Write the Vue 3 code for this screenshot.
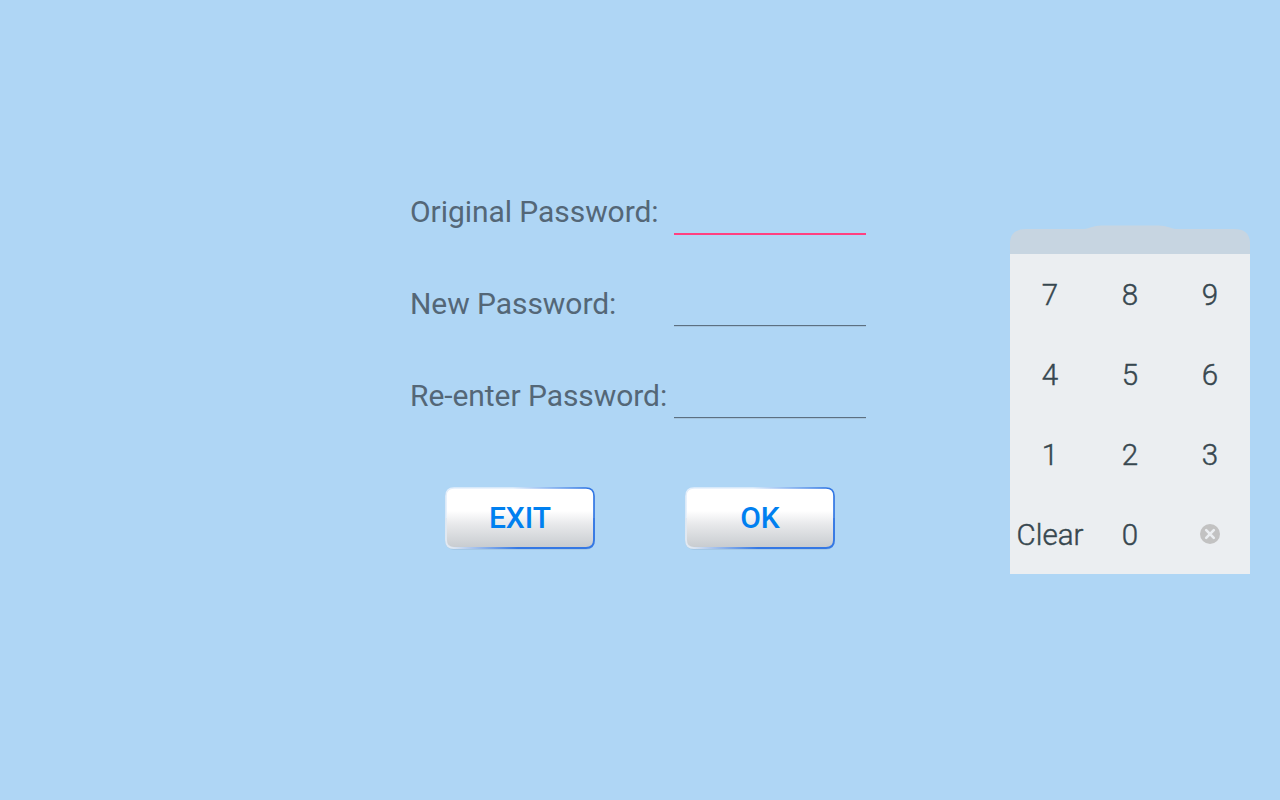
<script setup>
const fields = ['Original Password:', 'New Password:', 'Re-enter Password:']
const keys = ['7', '8', '9', '4', '5', '6', '1', '2', '3', 'Clear', '0']
</script>

<template>
  <main class="screen">
    <form class="form" @submit.prevent>
      <div v-for="(f, i) in fields" :key="f" class="row">
        <label>{{ f }}</label>
        <span class="line" :class="{ active: i === 0 }"></span>
      </div>
      <div class="actions">
        <button v-for="(t, i) in ['EXIT', 'OK']" :key="t" type="button">
          <svg width="154" height="66" viewBox="0 0 154 66">
            <defs>
              <linearGradient :id="'face' + i" x1="0" y1="0" x2="0" y2="1">
                <stop offset="0" stop-color="#fff" />
                <stop offset=".38" stop-color="#fff" />
                <stop offset=".6" stop-color="#e8e9eb" />
                <stop offset="1" stop-color="#c7cbcf" />
              </linearGradient>
              <linearGradient :id="'top' + i" gradientUnits="userSpaceOnUse" x1="70" y1="0" x2="140" y2="0">
                <stop offset="0" stop-color="#e4effb" />
                <stop offset="1" stop-color="#3478e4" />
              </linearGradient>
              <linearGradient :id="'bottom' + i" gradientUnits="userSpaceOnUse" x1="8" y1="0" x2="75" y2="0">
                <stop offset="0" stop-color="#e1e9f2" />
                <stop offset="1" stop-color="#3478e4" />
              </linearGradient>
            </defs>
            <rect x="2" y="3" width="150" height="62" rx="9" fill="#8faeca" opacity=".35" />
            <rect x="3" y="3" width="148" height="60" rx="8" :fill="`url(#face${i})`" />
            <path d="M3 33V11Q3 3 11 3H143Q151 3 151 11V33" fill="none" :stroke="`url(#top${i})`" stroke-width="1.7" />
            <path d="M3 33V55Q3 63 11 63H143Q151 63 151 55V33" fill="none" :stroke="`url(#bottom${i})`" stroke-width="1.9" />
          </svg>
          <span>{{ t }}</span>
        </button>
      </div>
    </form>
    <aside class="pad">
      <svg class="cap" width="240" height="29" viewBox="0 0 240 29">
        <path d="M0 29V17Q1 4 16 4H74Q77 4 81 2.2Q86 .4 91 .4H149Q154 .4 159 2.2Q163 4 166 4H224Q239 4 240 17V29Z" fill="#c7d5e1" />
      </svg>
      <div class="keys">
        <div v-for="k in keys" :key="k" class="key text">{{ k }}</div>
        <div class="key">
          <svg width="20" height="20" viewBox="0 0 20 20">
            <circle cx="10" cy="10" r="10" fill="#c2c2c2" />
            <path d="M6.2 6.2L13.8 13.8M13.8 6.2L6.2 13.8" stroke="#ebeef1" stroke-width="2.6" stroke-linecap="round" />
          </svg>
        </div>
      </div>
    </aside>
  </main>
</template>

<style>
body { margin: 0; }
</style>
<style scoped>
.screen { box-sizing: border-box; width: 1280px; height: 800px; background: #afd6f5; font-family: Roboto, sans-serif; display: flex; padding-left: 410px; overflow: hidden; }
.form { width: 456px; padding-top: 184px; }
.row { height: 92px; display: flex; }
label { width: 264px; font-size: 30px; line-height: 56px; letter-spacing: -0.06px; color: #546777; white-space: nowrap; }
.line { box-sizing: border-box; width: 192px; height: 50px; border-bottom: 1px solid #5c7081; box-shadow: 0 1px #a3c4df; }
.line.active { height: 51px; border-bottom: 2px solid #ff4081; box-shadow: none; }
.actions { display: flex; gap: 86px; padding: 25px 0 0 33px; }
button { width: 154px; height: 66px; padding: 0; border: 0; background: none; display: grid; place-items: center; }
button svg, button span { grid-area: 1 / 1; }
button span { font: 500 30px/66px Roboto, sans-serif; color: #0080f0; z-index: 1; }
.pad { width: 240px; margin: 225px 0 0 144px; }
.cap { display: block; }
.keys { display: grid; grid-template-columns: repeat(3, 80px); grid-auto-rows: 80px; background: #ebeef1; }
.key { box-sizing: border-box; display: flex; align-items: center; justify-content: center; color: #37474f; }
.text { padding-top: 2px; font-size: 29.5px; line-height: 36px; font-weight: 300; -webkit-text-stroke: 0.45px #37474f; }
</style>
